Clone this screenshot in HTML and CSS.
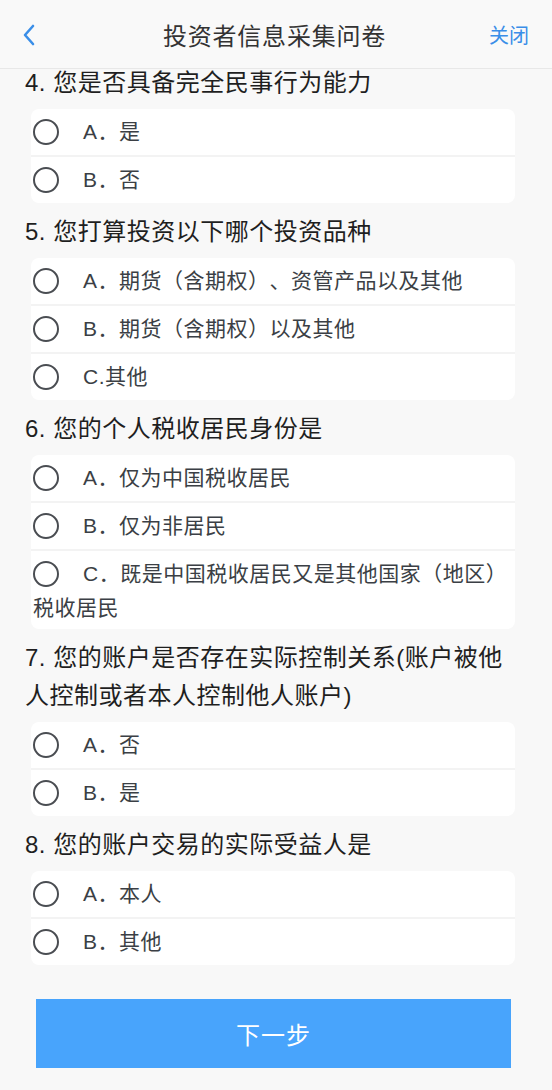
FILE: index.html
```html
<!DOCTYPE html>
<html lang="zh-CN">
<head>
<meta charset="utf-8">
<title>投资者信息采集问卷</title>
<link rel="stylesheet" href="styles.css">
</head>
<body>
<div class="page">
  <header class="navbar">
    <span class="nav-back">
      <svg width="14" height="22" viewBox="0 0 14 22"><path d="M11 2 L3 11 L11 20" fill="none" stroke="#3a8ee8" stroke-width="2.6" stroke-linecap="round" stroke-linejoin="round"/></svg>
    </span>
    <span class="nav-title">投资者信息采集问卷</span>
    <span class="nav-close">关闭</span>
  </header>
  <main class="viewport">
    <div class="scroller">
      <section class="question">
        <h2 class="q-title">4. 您是否具备完全民事行为能力</h2>
        <div class="card">
          <div class="option"><span class="radio"></span>A．是</div>
          <div class="option"><span class="radio"></span>B．否</div>
        </div>
      </section>
      <section class="question">
        <h2 class="q-title">5. 您打算投资以下哪个投资品种</h2>
        <div class="card">
          <div class="option"><span class="radio"></span>A．期货（含期权）、资管产品以及其他</div>
          <div class="option"><span class="radio"></span>B．期货（含期权）以及其他</div>
          <div class="option"><span class="radio"></span>C.其他</div>
        </div>
      </section>
      <section class="question">
        <h2 class="q-title">6. 您的个人税收居民身份是</h2>
        <div class="card">
          <div class="option"><span class="radio"></span>A．仅为中国税收居民</div>
          <div class="option"><span class="radio"></span>B．仅为非居民</div>
          <div class="option option-long"><span class="radio"></span>C．既是中国税收居民又是其他国家（地区）税收居民</div>
        </div>
      </section>
      <section class="question">
        <h2 class="q-title">7. 您的账户是否存在实际控制关系(账户被他人控制或者本人控制他人账户)</h2>
        <div class="card">
          <div class="option"><span class="radio"></span>A．否</div>
          <div class="option"><span class="radio"></span>B．是</div>
        </div>
      </section>
      <section class="question">
        <h2 class="q-title">8. 您的账户交易的实际受益人是</h2>
        <div class="card">
          <div class="option"><span class="radio"></span>A．本人</div>
          <div class="option"><span class="radio"></span>B．其他</div>
        </div>
      </section>
      <div class="actions">
        <button class="next-btn" type="button">下一步</button>
      </div>
    </div>
  </main>
</div>
</body>
</html>
```
FILE: styles.css
```css
* { box-sizing: border-box; }
html, body {
  margin: 0;
  padding: 0;
  background: #f8f8f8;
}
body {
  font-family: "Liberation Sans", "Noto Sans CJK SC", sans-serif;
  color: #222;
  text-spacing-trim: space-all;
}
.page {
  width: 552px;
  height: 1090px;
  overflow: hidden;
  display: flex;
  flex-direction: column;
}
.navbar {
  height: 69px;
  flex: 0 0 69px;
  display: flex;
  align-items: center;
  justify-content: space-between;
  padding: 0 23px 0 22px;
  background: #f9f9f9;
  border-bottom: 1px solid #e8e8e8;
  position: relative;
  z-index: 2;
}
.nav-back {
  width: 40px;
  display: flex;
  align-items: center;
  padding-top: 2px;
}
.nav-title {
  font-family: "Noto Sans CJK SC", sans-serif;
  font-size: 24px;
  letter-spacing: 0.8px;
  color: #333;
  margin-right: 2px;
}
.nav-close {
  width: 40px;
  text-align: right;
  font-family: "Noto Sans CJK SC", sans-serif;
  font-size: 20px;
  color: #3a8ee8;
}
.viewport {
  flex: 1;
  overflow: hidden;
}
.scroller {
  margin-top: -15px;
}
.q-title {
  margin: 0;
  padding: 10px 30px 7px 25px;
  font-size: 24px;
  letter-spacing: 0.5px;
  line-height: 38px;
  font-weight: normal;
  color: #1f1f1f;
}
.card {
  margin: 0 37px 0 31px;
  background: #fff;
  border-radius: 8px;
  overflow: hidden;
}
.option {
  padding: 5px 2px 5px 2px;
  font-size: 21px;
  line-height: 36px;
  letter-spacing: 0.5px;
  color: #3b3f45;
}
.option-long {
  line-height: 34px;
  padding-top: 6px;
  padding-bottom: 4px;
}
.option + .option {
  border-top: 2px solid #f3f3f3;
}
.radio {
  display: inline-block;
  width: 26px;
  height: 26px;
  border: 2px solid #4a4d52;
  border-radius: 50%;
  vertical-align: middle;
  position: relative;
  top: -1px;
  margin-right: 24px;
}
.actions {
  padding: 34px 41px 0 36px;
}
.next-btn {
  display: block;
  width: 100%;
  height: 69px;
  border: 0;
  border-radius: 0;
  background: #48a4fc;
  color: #fff;
  font-family: "Noto Sans CJK SC", sans-serif;
  font-size: 24px;
  letter-spacing: 1px;
}
```
